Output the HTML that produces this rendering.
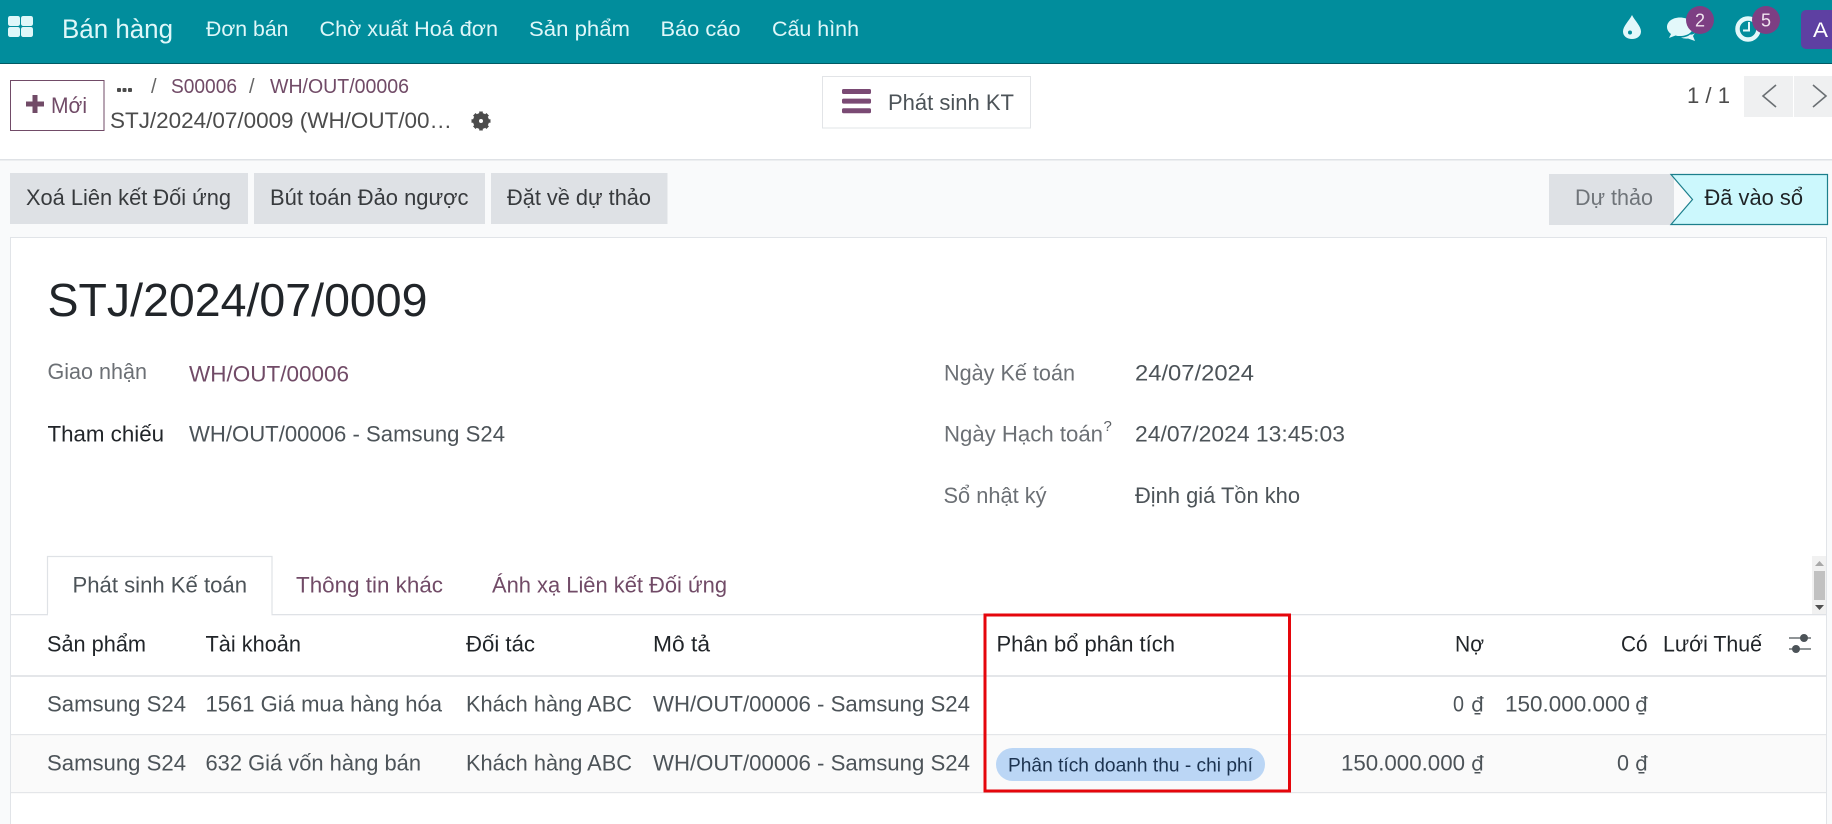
<!DOCTYPE html>
<html lang="vi">
<head>
<meta charset="utf-8">
<title>Bán hàng</title>
<style>
html,body{margin:0;padding:0;width:1832px;height:824px;overflow:hidden;background:#fff}
svg{display:block;font-family:"Liberation Sans","Noto Sans CJK SC",sans-serif}
.d{font-family:"DejaVu Sans",sans-serif}
</style>
</head>
<body>
<svg xmlns="http://www.w3.org/2000/svg" width="1832" height="824" viewBox="0 0 1832 824">
<!-- backgrounds -->
<rect x="0" y="0" width="1832" height="824" fill="#f9fafb"/>
<rect x="0" y="64" width="1832" height="95" fill="#fff"/>
<rect x="0" y="159" width="1832" height="1.5" fill="#dfe2e6"/>
<!-- navbar -->
<rect x="0" y="0" width="1832" height="63" fill="#018d9c"/>
<rect x="0" y="63" width="1832" height="1" fill="#015a64"/>
<g fill="#dff7f9">
<rect x="8" y="16" width="12" height="10" rx="2.2"/><rect x="21" y="16" width="12" height="10" rx="2.2"/>
<rect x="8" y="27" width="12" height="10" rx="2.2"/><rect x="21" y="27" width="12" height="10" rx="2.2"/>
</g>
<g fill="#dff7f9">
<text x="62" y="38" font-size="27" textLength="111" lengthAdjust="spacingAndGlyphs">Bán hàng</text>
<text x="206" y="36" font-size="21.5" textLength="82.5" lengthAdjust="spacingAndGlyphs">Đơn bán</text>
<text x="319.5" y="36" font-size="21.5" textLength="178.5" lengthAdjust="spacingAndGlyphs">Chờ xuất Hoá đơn</text>
<text x="529" y="36" font-size="21.5" textLength="101" lengthAdjust="spacingAndGlyphs">Sản phẩm</text>
<text x="660.5" y="36" font-size="21.5" textLength="80" lengthAdjust="spacingAndGlyphs">Báo cáo</text>
<text x="772" y="36" font-size="21.5" textLength="87" lengthAdjust="spacingAndGlyphs">Cấu hình</text>
</g>
<!-- drop -->
<path d="M1632 15C1635 21 1641 26 1641 31.5C1641 36 1637 39 1632 39C1627 39 1623 36 1623 31.5C1623 26 1629 21 1632 15Z" fill="#e3f8fa"/>
<circle cx="1630" cy="32.5" r="2" fill="#018d9c"/>
<!-- chat -->
<path d="M1680 17.5C1672 17.5 1667 22 1667 27C1667 30 1669 32.5 1671 34L1669 38L1675.5 35.5C1677 36 1678.5 36 1680 36C1688 36 1693 32 1693 27C1693 22 1688 17.5 1680 17.5Z" fill="#e3f8fa"/>
<path d="M1681 37.5C1684 37.5 1688 36.5 1690 34.5C1692 35 1694 34 1695 33L1693 36L1695 41L1688 38.5C1686 38.8 1683 38.5 1681 37.5Z" fill="#e3f8fa"/>
<circle cx="1700" cy="20" r="14" fill="#7d3f83"/>
<text x="1700" y="26.5" font-size="18" fill="#f1e4f0" text-anchor="middle">2</text>
<!-- clock -->
<circle cx="1748" cy="29" r="10.5" fill="none" stroke="#e3f8fa" stroke-width="4.5"/>
<path d="M1749 22V30.5H1743" fill="none" stroke="#e3f8fa" stroke-width="2"/>
<circle cx="1766" cy="20" r="14" fill="#7d3f83"/>
<text x="1766" y="26.5" font-size="18" fill="#f1e4f0" text-anchor="middle">5</text>
<!-- avatar -->
<rect x="1801" y="10" width="45" height="39" rx="5" fill="#5e40a2"/>
<text x="1813" y="37" font-size="21" fill="#fff" textLength="15" lengthAdjust="spacingAndGlyphs">A</text>

<!-- control panel -->
<rect x="10.5" y="80.5" width="93.5" height="50" fill="#fff" stroke="#714b67"/>
<path d="M35 95V113M26 104H44" stroke="#714b67" stroke-width="5"/>
<text x="51" y="113" font-size="22" fill="#714b67" textLength="36" lengthAdjust="spacingAndGlyphs">Mới</text>
<g fill="#4c4c4c"><rect x="117" y="88" width="4" height="4" rx="1"/><rect x="122.5" y="88" width="4" height="4" rx="1"/><rect x="128" y="88" width="4" height="4" rx="1"/></g>
<text x="151" y="93" font-size="20" fill="#666">/</text>
<text x="171" y="93" font-size="20" fill="#714b67" textLength="66" lengthAdjust="spacingAndGlyphs">S00006</text>
<text x="249" y="93" font-size="20" fill="#666">/</text>
<text x="270" y="93" font-size="20" fill="#714b67" textLength="139" lengthAdjust="spacingAndGlyphs">WH/OUT/00006</text>
<text x="110" y="128" font-size="22" fill="#4c4c4c" textLength="342" lengthAdjust="spacingAndGlyphs">STJ/2024/07/0009 (WH/OUT/00…</text>
<!-- gear -->
<circle cx="481" cy="121" r="5" fill="none" stroke="#4c4c4c" stroke-width="6"/>
<g stroke="#4c4c4c" stroke-width="3.6"><path d="M481 111.5V115M481 127V130.5M471.5 121H475M487 121H490.5M474.3 114.3L476.8 116.8M485.2 125.2L487.7 127.7M487.7 114.3L485.2 116.8M476.8 125.2L474.3 127.7"/></g>
<!-- Phát sinh KT -->
<rect x="822.5" y="76.5" width="208" height="51.5" fill="#fff" stroke="#e2e4e7"/>
<g fill="#7a4a74"><rect x="842" y="89" width="29" height="5" rx="1.5"/><rect x="842" y="98.6" width="29" height="5" rx="1.5"/><rect x="842" y="108.2" width="29" height="5" rx="1.5"/></g>
<text x="888" y="110" font-size="22.5" fill="#4c5358" textLength="126" lengthAdjust="spacingAndGlyphs">Phát sinh KT</text>
<!-- pager -->
<text x="1687" y="103" font-size="22" fill="#4c4c4c" textLength="43" lengthAdjust="spacingAndGlyphs">1 / 1</text>
<rect x="1744" y="76" width="49" height="41" fill="#eff0f1"/>
<rect x="1794" y="76" width="38" height="41" fill="#eff0f1"/>
<path d="M1776 85L1763 96L1776 107" fill="none" stroke="#6a6f73" stroke-width="1.6"/>
<path d="M1813 85L1826 96L1813 107" fill="none" stroke="#6a6f73" stroke-width="1.6"/>

<!-- action buttons -->
<g fill="#dee1e5">
<rect x="10" y="173" width="238" height="51"/>
<rect x="254" y="173" width="231" height="51"/>
<rect x="491" y="173" width="176.5" height="51"/>
<rect x="1549" y="174" width="125" height="51"/>
</g>
<g fill="#373a3d" font-size="22">
<text x="26" y="205" textLength="205" lengthAdjust="spacingAndGlyphs">Xoá Liên kết Đối ứng</text>
<text x="270" y="205" textLength="198.5" lengthAdjust="spacingAndGlyphs">Bút toán Đảo ngược</text>
<text x="507" y="205" textLength="144" lengthAdjust="spacingAndGlyphs">Đặt về dự thảo</text>
</g>
<!-- statusbar -->
<text x="1575" y="205" font-size="22" fill="#6f7479" textLength="78" lengthAdjust="spacingAndGlyphs">Dự thảo</text>
<path d="M1671 174.5H1827.5V224.5H1671L1692.5 199.5Z" fill="#ccf8fd" stroke="#1c7f8c" stroke-width="1.2"/>
<text x="1704.5" y="205" font-size="22" fill="#1f2326" textLength="98.5" lengthAdjust="spacingAndGlyphs">Đã vào sổ</text>

<!-- sheet -->
<rect x="10.5" y="237.5" width="1816" height="600" fill="#fff" stroke="#e1e4e8"/>
<text x="47.5" y="316" font-size="46" fill="#212529" textLength="380" lengthAdjust="spacingAndGlyphs">STJ/2024/07/0009</text>

<g font-size="22">
<text x="47.5" y="379" fill="#6c7075" textLength="99.5" lengthAdjust="spacingAndGlyphs">Giao nhận</text>
<text x="189" y="381.5" fill="#714b67" textLength="160" lengthAdjust="spacingAndGlyphs">WH/OUT/00006</text>
<text x="47.5" y="441.5" fill="#212529" textLength="116.5" lengthAdjust="spacingAndGlyphs">Tham chiếu</text>
<text x="189" y="441.5" fill="#4c5358" textLength="316" lengthAdjust="spacingAndGlyphs">WH/OUT/00006 - Samsung S24</text>
<text x="944" y="380.5" fill="#6c7075" textLength="131" lengthAdjust="spacingAndGlyphs">Ngày Kế toán</text>
<text x="1135" y="380.5" fill="#4c5358" textLength="119" lengthAdjust="spacingAndGlyphs">24/07/2024</text>
<text x="944" y="441.5" fill="#6c7075" textLength="159" lengthAdjust="spacingAndGlyphs">Ngày Hạch toán</text>
<text x="1135" y="441.5" fill="#4c5358" textLength="210" lengthAdjust="spacingAndGlyphs">24/07/2024 13:45:03</text>
<text x="943.5" y="503" fill="#6c7075" textLength="103" lengthAdjust="spacingAndGlyphs">Sổ nhật ký</text>
<text x="1135" y="503" fill="#4c5358" textLength="165" lengthAdjust="spacingAndGlyphs">Định giá Tồn kho</text>
</g>
<text x="1103.5" y="431" font-size="15" fill="#5c6065">?</text>

<!-- tabs -->
<rect x="10" y="614" width="1816" height="1.3" fill="#dfe2e6"/>
<path d="M47.5 615V556.5H272V615" fill="#fff" stroke="#dfe2e6" stroke-width="1.2"/>
<rect x="48" y="613" width="223.5" height="3" fill="#fff"/>
<g font-size="22">
<text x="72.5" y="592.5" fill="#4c5358" textLength="174.5" lengthAdjust="spacingAndGlyphs">Phát sinh Kế toán</text>
<text x="296" y="592.5" fill="#714b67" textLength="147" lengthAdjust="spacingAndGlyphs">Thông tin khác</text>
<text x="492" y="592.5" fill="#714b67" textLength="235" lengthAdjust="spacingAndGlyphs">Ánh xạ Liên kết Đối ứng</text>
</g>
<!-- scrollbar -->
<rect x="1812" y="556" width="14" height="58" fill="#f1f1f1"/>
<rect x="1814" y="571" width="11" height="29" fill="#c1c1c1"/>
<path d="M1819.5 561L1824 566H1815Z" fill="#a8a8a8"/>
<path d="M1815 605H1824L1819.5 610Z" fill="#505050"/>

<!-- table -->
<rect x="11" y="734" width="1815" height="58" fill="#fafafa"/>
<rect x="11" y="675" width="1815" height="2" fill="#e4e6e9"/>
<rect x="11" y="734" width="1815" height="1.2" fill="#e4e6e9"/>
<rect x="11" y="792" width="1815" height="1.2" fill="#e4e6e9"/>

<g font-size="22" fill="#212529">
<text x="47" y="651.5" textLength="99" lengthAdjust="spacingAndGlyphs">Sản phẩm</text>
<text x="205.5" y="651.5" textLength="95.5" lengthAdjust="spacingAndGlyphs">Tài khoản</text>
<text x="466" y="651.5" textLength="69" lengthAdjust="spacingAndGlyphs">Đối tác</text>
<text x="653" y="651.5" textLength="57" lengthAdjust="spacingAndGlyphs">Mô tả</text>
<text x="996.5" y="651.5" textLength="178.5" lengthAdjust="spacingAndGlyphs">Phân bổ phân tích</text>
<text x="1455" y="651.5" textLength="29" lengthAdjust="spacingAndGlyphs">Nợ</text>
<text x="1621" y="651.5" textLength="26.5" lengthAdjust="spacingAndGlyphs">Có</text>
<text x="1663" y="651.5" textLength="99" lengthAdjust="spacingAndGlyphs">Lưới Thuế</text>
</g>
<!-- sliders -->
<path d="M1789 638H1811M1789 649H1811" stroke="#4c5358" stroke-width="1.3"/>
<circle cx="1804" cy="638" r="4" fill="#4c5358"/>
<circle cx="1796" cy="649" r="4" fill="#4c5358"/>

<g font-size="22" fill="#4c5358">
<text x="47" y="711.5" textLength="139" lengthAdjust="spacingAndGlyphs">Samsung S24</text>
<text x="205.5" y="711.5" textLength="236.5" lengthAdjust="spacingAndGlyphs">1561 Giá mua hàng hóa</text>
<text x="466" y="711.5" textLength="166" lengthAdjust="spacingAndGlyphs">Khách hàng ABC</text>
<text x="653" y="711.5" textLength="317" lengthAdjust="spacingAndGlyphs">WH/OUT/00006 - Samsung S24</text>
<text x="1453" y="711.5" textLength="11" lengthAdjust="spacingAndGlyphs">0</text>
<text class="d" x="1471" y="711.5" font-size="20" textLength="13" lengthAdjust="spacingAndGlyphs">₫</text>
<text x="1505" y="711.5" textLength="125" lengthAdjust="spacingAndGlyphs">150.000.000</text>
<text class="d" x="1635" y="711.5" font-size="20" textLength="13" lengthAdjust="spacingAndGlyphs">₫</text>
<text x="47" y="770.5" textLength="139" lengthAdjust="spacingAndGlyphs">Samsung S24</text>
<text x="205.5" y="770.5" textLength="215.5" lengthAdjust="spacingAndGlyphs">632 Giá vốn hàng bán</text>
<text x="466" y="770.5" textLength="166" lengthAdjust="spacingAndGlyphs">Khách hàng ABC</text>
<text x="653" y="770.5" textLength="317" lengthAdjust="spacingAndGlyphs">WH/OUT/00006 - Samsung S24</text>
<text x="1341" y="770.5" textLength="124" lengthAdjust="spacingAndGlyphs">150.000.000</text>
<text class="d" x="1471" y="770.5" font-size="20" textLength="13" lengthAdjust="spacingAndGlyphs">₫</text>
<text x="1617" y="770.5" textLength="12" lengthAdjust="spacingAndGlyphs">0</text>
<text class="d" x="1635" y="770.5" font-size="20" textLength="13" lengthAdjust="spacingAndGlyphs">₫</text>
</g>
<!-- pill -->
<rect x="996" y="748" width="269" height="33" rx="16.5" fill="#bbd6f5"/>
<text x="1008" y="771.5" font-size="19.5" fill="#1c3350" textLength="245" lengthAdjust="spacingAndGlyphs">Phân tích doanh thu - chi phí</text>
<!-- red highlight -->
<rect x="985" y="615" width="304.5" height="176" fill="none" stroke="#e5060c" stroke-width="3"/>
</svg>
</body>
</html>
